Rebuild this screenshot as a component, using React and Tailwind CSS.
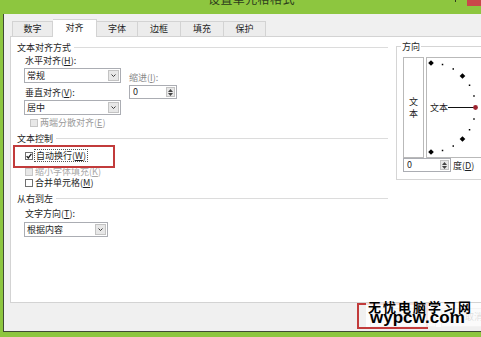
import clsx from 'clsx';

function Key({ k }) {
  return (
    <>
      (<span className="underline underline-offset-[1px]">{k}</span>)
    </>
  );
}

function Box({ checked, disabled }) {
  return (
    <span
      className={clsx(
        'w-[8px] h-[8px] border shrink-0 flex items-center justify-center',
        disabled ? 'border-[#c6c6c6] bg-[#e8e8e8]' : 'border-[#707070] bg-white'
      )}
    >
      {checked && (
        <svg width="6" height="6" viewBox="0 0 6 6">
          <path d="M0.6 3.1 L2.3 4.9 L5.4 0.9" fill="none" stroke="#1a1a1a" strokeWidth="1.3" />
        </svg>
      )}
    </span>
  );
}

function Select({ value, wide }) {
  return (
    <div
      className={clsx(
        'h-[15px] border border-[#abadb3] bg-white flex items-center',
        wide ? 'w-[97px]' : 'w-[84px]'
      )}
    >
      <span className="pl-[2px] leading-[11px]">{value}</span>
      <span className="ml-auto mr-[1px] w-[11px] h-[11px] border border-[#c3c3c3] bg-[#e7e7e7] flex items-center justify-center">
        <svg width="5" height="3" viewBox="0 0 5 3">
          <path d="M0.5 0.5 L2.5 2.5 L4.5 0.5" fill="none" stroke="#3c3c3c" />
        </svg>
      </span>
    </div>
  );
}

function Spin() {
  return (
    <div className="w-[48px] h-[14px] border border-[#abadb3] bg-white flex">
      <span className="flex-1 pl-[3px] leading-[12px]">0</span>
      <span className="w-[9px] my-[1px] mr-[1px] border border-[#c3c3c3] bg-[#e7e7e7] flex flex-col items-center justify-center gap-[1px]">
        <svg width="5" height="3" viewBox="0 0 5 3">
          <path d="M0 3 L2.5 0 L5 3Z" fill="#444" />
        </svg>
        <svg width="5" height="3" viewBox="0 0 5 3">
          <path d="M0 0 L2.5 3 L5 0Z" fill="#444" />
        </svg>
      </span>
    </div>
  );
}

function Group({ title, className }) {
  return (
    <div className={clsx('h-[11px] flex items-center', className)}>
      <span className="leading-[11px]">{title}</span>
      <span className="flex-1 h-px bg-[#dcdcdc] ml-[3px]" />
    </div>
  );
}

// orientation dial: half circle of marks, centre at the left edge
function Dial() {
  const cx = 4;
  const cy = 49.5;
  const r = 44.5;
  const marks = [];
  for (let a = 90; a >= -90; a -= 15) {
    if (a === 0) continue;
    const rad = (a * Math.PI) / 180;
    const x = cx + r * Math.cos(rad);
    const y = cy - r * Math.sin(rad);
    if (a % 45 === 0) {
      marks.push(
        <rect key={a} x={x - 2} y={y - 2} width="4" height="4" fill="#000" transform={`rotate(45 ${x} ${y})`} />
      );
    } else {
      marks.push(<rect key={a} x={x - 0.75} y={y - 0.75} width="1.5" height="1.5" fill="#000" />);
    }
  }
  return (
    <svg width="68" height="99" className="block">
      {marks}
      <text x="3" y="52.8" fontSize="9" fontFamily="Noto Sans CJK SC, sans-serif" fill="#1e1e1e">
        文本
      </text>
      <line x1="21" y1="49.5" x2="47" y2="49.5" stroke="#111" />
      <circle cx="48.5" cy="49.5" r="2.4" fill="#9e2430" />
    </svg>
  );
}

export default function App() {
  return (
    <div className="w-[481px] h-[337px] overflow-hidden bg-[#8dc63f] flex flex-col text-[9px] text-[#1e1e1e] font-['Noto_Sans_CJK_SC',sans-serif]">
      {/* title bar */}
      <div className="h-[14px] shrink-0 flex items-start">
        <div className="ml-[208px] -mt-[7px] text-[12px] leading-[12px] tracking-[0.4px] text-[#2b3a1c]">
          设置单元格格式
        </div>
        <div className="ml-auto mr-[11px] w-[1px] h-[2px] bg-[#2d3b1e]" />
        <div className="w-[14px] h-[6px] bg-[#c9484a]" />
      </div>

      {/* window body */}
      <div className="relative ml-[3px] h-[318px] shrink-0 border-l border-b border-[#3f4a35] bg-[#f0f0f0] pl-[6px] pt-[5px] flex flex-col">
        {/* tabs */}
        <div className="relative z-10 ml-[2px] h-[17px] flex items-end">
          <div className="w-[41px] h-[15px] border border-b-0 border-[#d3d3d3] bg-[#ececec] flex items-center justify-center">数字</div>
          <div className="w-[44px] h-[18px] -mb-[1px] border-t border-r border-[#d3d3d3] bg-white flex items-center justify-center pb-[1px]">对齐</div>
          <div className="w-[41px] h-[15px] border-t border-r border-[#d3d3d3] bg-[#ececec] flex items-center justify-center">字体</div>
          <div className="w-[43px] h-[15px] border-t border-r border-[#d3d3d3] bg-[#ececec] flex items-center justify-center">边框</div>
          <div className="w-[43px] h-[15px] border-t border-r border-[#d3d3d3] bg-[#ececec] flex items-center justify-center">填充</div>
          <div className="w-[42px] h-[15px] border-t border-r border-[#d3d3d3] bg-[#ececec] flex items-center justify-center">保护</div>
        </div>

        {/* tab page */}
        <div className="relative w-[495px] h-[267px] shrink-0 border border-[#d3d3d3] bg-white flex items-start">
          <div className="w-[377px] pl-[6px] flex flex-col">
            <Group title="文本对齐方式" className="mt-[5px]" />
            <div className="mt-[2px] flex">
              <div className="pl-[7px] flex flex-col">
                <div className="h-[11px] leading-[11px] pl-[1px]">
                  水平对齐<Key k="H" />:
                </div>
                <div className="mt-[2px]">
                  <Select value="常规" wide />
                </div>
                <div className="mt-[4px] h-[11px] leading-[11px] pl-[1px]">
                  垂直对齐<Key k="V" />:
                </div>
                <div className="mt-[2px]">
                  <Select value="居中" wide />
                </div>
              </div>
              <div className="ml-[8px] pt-[17px] flex flex-col">
                <div className="h-[11px] leading-[11px] text-[#8a8a8a]">
                  缩进<Key k="I" />:
                </div>
                <div className="mt-[2px]">
                  <Spin />
                </div>
              </div>
            </div>
            <div className="mt-[2px] pl-[13px] h-[11px] flex items-center gap-[2px] text-[#9a9a9a]">
              <Box disabled />
              <span className="leading-[11px]">
                两端分散对齐<Key k="E" />
              </span>
            </div>

            <Group title="文本控制" className="mt-[5px]" />
            <div className="mt-[5px] pl-[8px] h-[13px] flex items-center gap-[1px]">
              <Box checked />
              <span className="h-[13px] border border-dotted border-[#555] px-[1px] leading-[11px]">
                自动换行<Key k="W" />
              </span>
            </div>
            <div className="mt-[4px] pl-[8px] h-[11px] flex items-center gap-[2px] text-[#a8a8a8]">
              <Box disabled />
              <span className="leading-[11px]">
                缩小字体填充<Key k="K" />
              </span>
            </div>
            <div className="pl-[8px] h-[11px] flex items-center gap-[2px]">
              <Box />
              <span className="leading-[11px]">
                合并单元格<Key k="M" />
              </span>
            </div>

            <Group title="从右到左" className="mt-[5px]" />
            <div className="mt-[4px] pl-[8px] h-[11px] leading-[11px]">
              文字方向<Key k="T" />:
            </div>
            <div className="mt-[3px] pl-[7px]">
              <Select value="根据内容" />
            </div>
          </div>

          <fieldset className="ml-[8px] mt-[4px] w-[100px] border border-[#d5d5d5] pl-[6px] pb-[7px]">
            <legend className="-ml-[2px] px-[1px] leading-[11px]">方向</legend>
            <div className="mt-[5px] flex gap-[2px]">
              <div className="w-[21px] h-[101px] border border-[#b9b9b9] bg-white flex flex-col items-center justify-center leading-[12px]">
                <span>文</span>
                <span>本</span>
              </div>
              <div className="w-[70px] h-[101px] border border-[#b9b9b9] bg-white">
                <Dial />
              </div>
            </div>
            <div className="flex items-center">
              <Spin />
              <span className="ml-[2px] leading-[11px]">
                度<Key k="D" />
              </span>
            </div>
          </fieldset>

          {/* red highlight round the wrap-text option */}
          <div className="absolute left-[2px] top-[108px] w-[102px] h-[23px] border-2 border-[#c23b3b]" />
        </div>

        {/* dialog buttons */}
        <div className="flex-1 flex items-center pl-[360px]">
          <div className="w-[66px] h-[19px] shrink-0 border border-[#adadad] bg-[#e5e5e5] flex items-center justify-center">确定</div>
          <div className="ml-[5px] w-[66px] h-[19px] shrink-0 border border-[#adadad] bg-[#e5e5e5] flex items-center justify-center">取消</div>
        </div>

        {/* red box + watermark over the buttons */}
        <div className="absolute left-[353px] top-[289px] w-[71px] h-[26px] border-2 border-[#c23b3b]" />
        <div className="absolute left-[362px] top-[289px] w-[116px] h-[24px] bg-white/85 flex flex-col">
          <span className="-mt-[2px] pl-[2px] h-[11px] text-[13px] leading-[11px] font-bold tracking-[2px] text-black whitespace-nowrap">
            无忧电脑学习网
          </span>
          <span className="-mt-[1px] pl-[4px] h-[14px] text-[17px] leading-[14px] font-bold text-black font-['Liberation_Sans',sans-serif]">
            wypcw.com
          </span>
        </div>
      </div>
    </div>
  );
}
